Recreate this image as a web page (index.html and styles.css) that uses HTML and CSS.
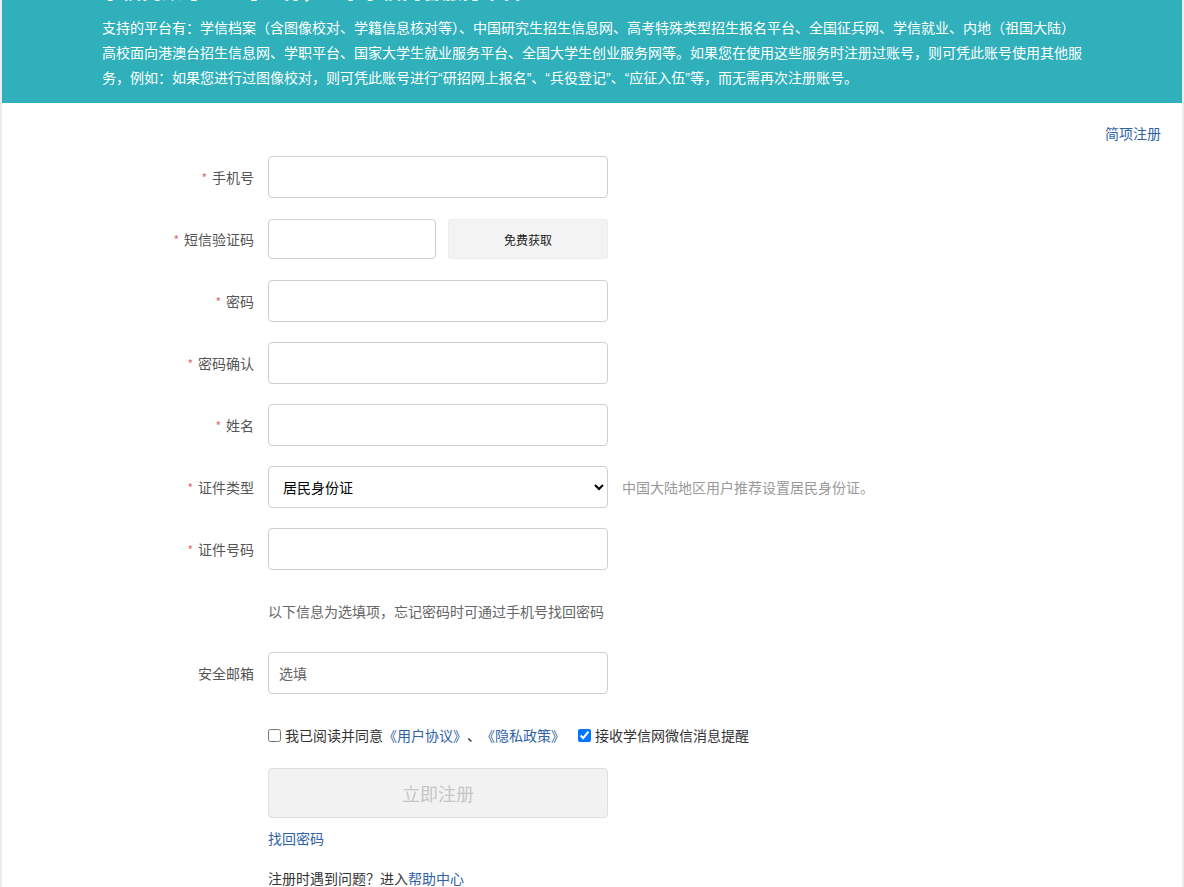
FILE: index.html
```html
<!DOCTYPE html>
<html lang="zh-CN">
<head>
<meta charset="utf-8">
<title>学信网账号注册</title>
<link rel="stylesheet" href="styles.css">
</head>
<body>
<div class="page">
  <div class="banner">
    <h2 class="banner-title">学信网账号：一号通行，登录学信网各服务平台</h2>
    <p class="banner-text">支持的平台有：学信档案（含图像校对、学籍信息核对等）、中国研究生招生信息网、高考特殊类型招生报名平台、全国征兵网、学信就业、内地（祖国大陆）高校面向港澳台招生信息网、学职平台、国家大学生就业服务平台、全国大学生创业服务网等。如果您在使用这些服务时注册过账号，则可凭此账号使用其他服务，例如：如果您进行过图像校对，则可凭此账号进行<span class="q">“</span>研招网上报名<span class="q">”</span>、<span class="q">“</span>兵役登记<span class="q">”</span>、<span class="q">“</span>应征入伍<span class="q">”</span>等，而无需再次注册账号。</p>
  </div>

  <div class="switch-row"><a class="link" href="#">简项注册</a></div>

  <form class="form">
    <div class="row">
      <label class="label"><span class="req">*</span>手机号</label>
      <input class="input" type="text">
    </div>
    <div class="row">
      <label class="label"><span class="req">*</span>短信验证码</label>
      <input class="input input-short" type="text">
      <button type="button" class="sms-btn">免费获取</button>
    </div>
    <div class="row">
      <label class="label"><span class="req">*</span>密码</label>
      <input class="input" type="password">
    </div>
    <div class="row">
      <label class="label"><span class="req">*</span>密码确认</label>
      <input class="input" type="password">
    </div>
    <div class="row">
      <label class="label"><span class="req">*</span>姓名</label>
      <input class="input" type="text">
    </div>
    <div class="row">
      <label class="label"><span class="req">*</span>证件类型</label>
      <select class="input select">
        <option>居民身份证</option>
      </select>
      <span class="hint">中国大陆地区用户推荐设置居民身份证。</span>
    </div>
    <div class="row">
      <label class="label"><span class="req">*</span>证件号码</label>
      <input class="input" type="text">
    </div>
    <div class="row">
      <span class="label"></span>
      <span class="tip">以下信息为选填项，忘记密码时可通过手机号找回密码</span>
    </div>
    <div class="row">
      <label class="label">安全邮箱</label>
      <input class="input" type="text" placeholder="选填">
    </div>
    <div class="row row-check">
      <span class="label"></span>
      <label class="check"><input type="checkbox">我已阅读并同意<a class="link" href="#">《用户协议》</a>、<a class="link" href="#">《隐私政策》</a></label>
      <label class="check check-second"><input type="checkbox" checked>接收学信网微信消息提醒</label>
    </div>
    <div class="row-plain">
      <span class="label"></span>
      <button type="button" class="submit" disabled>立即注册</button>
    </div>
    <div class="row-plain row-find">
      <span class="label"></span>
      <a class="link" href="#">找回密码</a>
    </div>
    <div class="row-plain row-help">
      <span class="label"></span>
      <span class="help">注册时遇到问题？进入<a class="link" href="#">帮助中心</a></span>
    </div>
  </form>
</div>
</body>
</html>
```

FILE: styles.css
```css
* { box-sizing: border-box; }

html, body {
  margin: 0;
  padding: 0;
  background: #fff;
}

body {
  font-family: "Noto Sans CJK SC", "Noto Sans", "Liberation Sans", sans-serif;
  font-size: 14px;
  color: #333;
  overflow: hidden;
  height: 887px;
}

.page {
  width: 1184px;
  min-height: 1000px;
  margin-top: -43px;
  border-left: 2px solid #ececec;
  border-right: 2px solid #ececec;
}

.banner {
  background: #2fb0bb;
  color: #fff;
  padding: 20px 0 13px 100px;
}

.banner-title {
  margin: 0 0 10px;
  font-size: 20px;
  line-height: 28px;
  height: 28px;
  font-weight: bold;
}

.banner-text {
  margin: 0;
  width: 984px;
  height: 75px;
  font-size: 14px;
  line-height: 25px;
}

.q {
  font-family: "Liberation Sans", sans-serif;
}

.link {
  color: #2e62a5;
  text-decoration: none;
}

.switch-row {
  margin-top: 20px;
  padding-right: 21px;
  text-align: right;
  line-height: 20px;
  height: 20px;
}

.form {
  margin-top: 13px;
  display: flex;
  flex-direction: column;
  gap: 20px;
}

.row {
  display: flex;
  align-items: center;
  height: 42px;
}

.label {
  width: 266px;
  flex: none;
  text-align: right;
  padding-right: 14px;
  color: #555;
  font-size: 14px;
  line-height: 20px;
}

.req {
  color: #e06a6a;
  font-size: 12px;
  margin-right: 5px;
}

.input {
  width: 340px;
  height: 42px;
  border: 1px solid #cfcfcf;
  border-radius: 4px;
  padding: 0 10px;
  font-family: inherit;
  font-size: 14px;
  color: #333;
  background: #fff;
  outline: none;
}

.input::placeholder {
  color: #666;
}

.input-short {
  width: 168px;
  height: 40px;
}

.sms-btn {
  margin-left: 12px;
  width: 160px;
  height: 40px;
  border: 1px solid #ececec;
  border-radius: 3px;
  background: #f3f3f3;
  color: #222;
  font-family: inherit;
  font-size: 12px;
}

.select {
  padding: 0 6px 0 10px;
  color: #000;
}

.hint {
  margin-left: 14px;
  color: #999;
  font-size: 14px;
}

.tip {
  color: #666;
  font-size: 14px;
}

.check {
  display: flex;
  align-items: center;
  font-size: 14px;
  color: #333;
}

.check input {
  width: 13px;
  height: 13px;
  margin: 0 4px 0 0;
}

.check-second {
  margin-left: 13px;
}

.row-plain {
  display: flex;
  align-items: center;
}

.form .row-plain {
  margin-top: -8px;
}

.submit {
  width: 340px;
  height: 50px;
  border: 1px solid #dedede;
  border-radius: 4px;
  background: #f2f2f2;
  color: #c6c6c6;
  font-family: inherit;
  font-size: 18px;
}

.form .row-find {
  margin-top: -10px;
  line-height: 20px;
}

.form .row-help {
  margin-top: 0;
  line-height: 20px;
}

.help {
  color: #333;
}
```
